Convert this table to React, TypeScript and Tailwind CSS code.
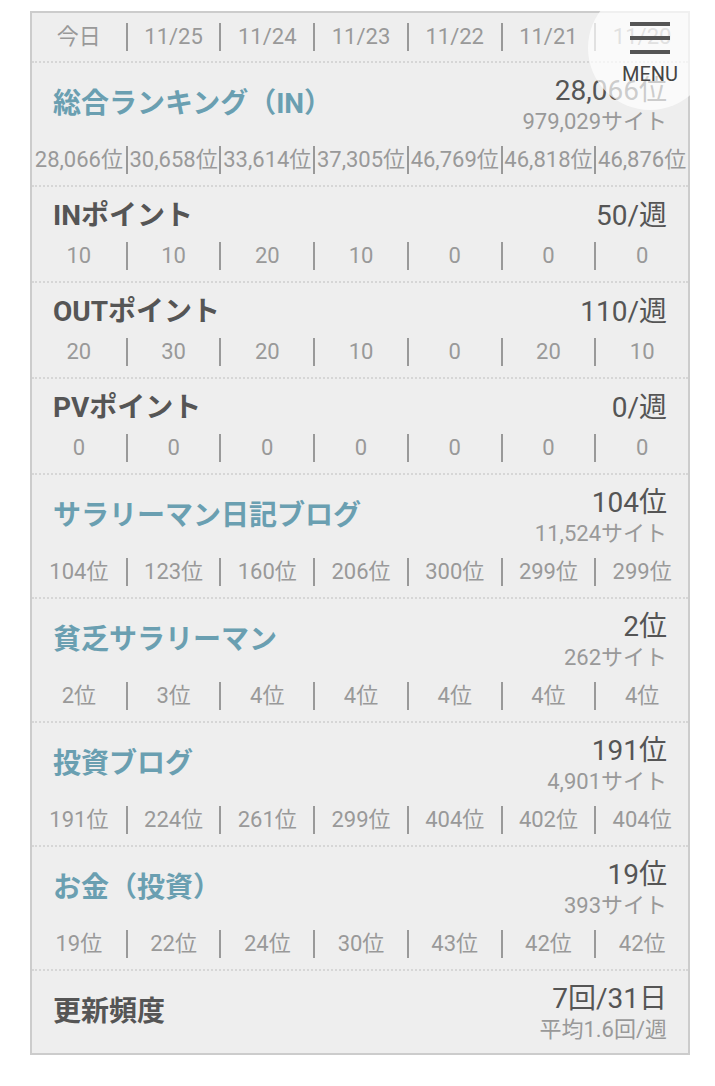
import React from "react";

type Section = {
  title: string;
  teal: boolean;
  main: string;
  sub?: string;
  values?: string[];
};

const dates = ["今日", "11/25", "11/24", "11/23", "11/22", "11/21", "11/20"];

const sections: Section[] = [
  {
    title: "総合ランキング（IN）",
    teal: true,
    main: "28,066位",
    sub: "979,029サイト",
    values: ["28,066位", "30,658位", "33,614位", "37,305位", "46,769位", "46,818位", "46,876位"],
  },
  { title: "INポイント", teal: false, main: "50/週", values: ["10", "10", "20", "10", "0", "0", "0"] },
  { title: "OUTポイント", teal: false, main: "110/週", values: ["20", "30", "20", "10", "0", "20", "10"] },
  { title: "PVポイント", teal: false, main: "0/週", values: ["0", "0", "0", "0", "0", "0", "0"] },
  {
    title: "サラリーマン日記ブログ",
    teal: true,
    main: "104位",
    sub: "11,524サイト",
    values: ["104位", "123位", "160位", "206位", "300位", "299位", "299位"],
  },
  {
    title: "貧乏サラリーマン",
    teal: true,
    main: "2位",
    sub: "262サイト",
    values: ["2位", "3位", "4位", "4位", "4位", "4位", "4位"],
  },
  {
    title: "投資ブログ",
    teal: true,
    main: "191位",
    sub: "4,901サイト",
    values: ["191位", "224位", "261位", "299位", "404位", "402位", "404位"],
  },
  {
    title: "お金（投資）",
    teal: true,
    main: "19位",
    sub: "393サイト",
    values: ["19位", "22位", "24位", "30位", "43位", "42位", "42位"],
  },
  { title: "更新頻度", teal: false, main: "7回/31日", sub: "平均1.6回/週" },
];

function Row({ items }: { items: string[] }) {
  return (
    <div className="grid grid-cols-7">
      {items.map((t, i) => (
        <div
          key={i}
          className={
            "flex h-[28px] items-center justify-center whitespace-nowrap text-[22px] leading-[28px] text-[#999] " +
            (i > 0 ? "border-l-2 border-[#999]" : "")
          }
        >
          {t}
        </div>
      ))}
    </div>
  );
}

export default function App() {
  return (
    <div
      className="relative min-h-[1086px] bg-white pt-[11px]"
      style={{ fontFamily: 'Roboto, "Noto Sans CJK JP", sans-serif' }}
    >
      <div className="ml-[30px] w-[660px] border-2 border-[#ccc] bg-[#eee]">
        <div className="border-b-2 border-dotted border-[#d6d6d6] pt-[10px] pb-[10px]">
          <Row items={dates} />
        </div>
        {sections.map((s, idx) => {
          const last = idx === sections.length - 1;
          return (
            <div
              key={idx}
              className={
                (s.sub ? "pt-[13px] " : "pt-[14px] ") +
                (s.values ? "pb-[11px] " : "pb-[9px] ") +
                (!last ? "border-b-2 border-dotted border-[#d6d6d6]" : "")
              }
            >
              <div className="flex items-center justify-between px-[21px]">
                <div
                  className={
                    "text-[28px] font-bold leading-[30px] " +
                    (s.sub ? "mb-[4px] " : "") +
                    (s.teal ? "text-[#6a9fb1]" : "text-[#555]")
                  }
                >
                  {s.title}
                </div>
                <div className="flex flex-col items-end">
                  <div className="text-[28px] leading-[30px] text-[#555]">{s.main}</div>
                  {s.sub && (
                    <div className="mt-[2px] text-[22px] leading-[28px] text-[#999]">{s.sub}</div>
                  )}
                </div>
              </div>
              {s.values && (
                <div className={s.sub ? "mt-[10px]" : "mt-[11px]"}>
                  <Row items={s.values} />
                </div>
              )}
            </div>
          );
        })}
      </div>

      <div className="absolute left-[588px] top-[-14px] flex h-[124px] w-[124px] flex-col items-center rounded-full bg-white/70">
        <div className="mt-[36px] flex w-[40px] flex-col gap-[10px]">
          <div className="h-[4px] w-[40px] bg-[#555]" />
          <div className="h-[4px] w-[40px] bg-[#555]" />
          <div className="h-[4px] w-[40px] bg-[#555]" />
        </div>
        <div className="mt-[9px] text-[20px] leading-[22px] text-[#444]">MENU</div>
      </div>
    </div>
  );
}
